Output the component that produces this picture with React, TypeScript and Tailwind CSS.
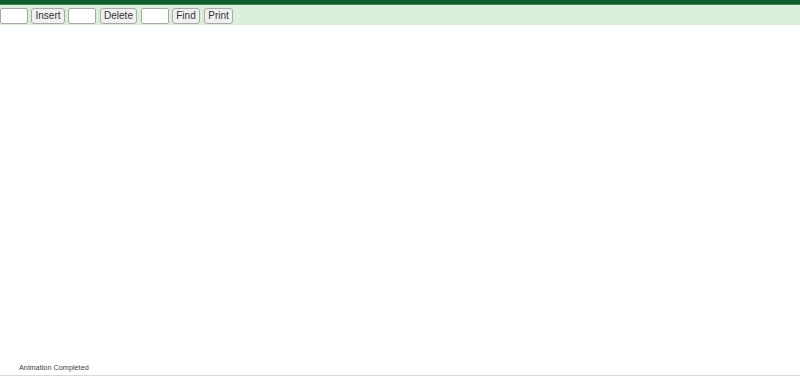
export default function App() {
  const btn =
    "h-[16px] rounded-[3px] border border-[#a9a9a9] bg-[#f0f0f0] p-0 text-center text-[10px] leading-none text-[#333]"
  const inp = "h-[16px] w-[28px] rounded-[2px] border border-[#a9a9a9] bg-white"

  return (
    <div className="flex h-[376px] w-[800px] flex-col bg-white font-['Liberation_Sans',Arial,sans-serif]">
      <div className="h-[4px] bg-[#0b5e2b]" />
      <div className="h-[1px] bg-[#3f8a4f]" />
      <div className="flex h-[20px] items-center bg-[#dcefdc] pt-[1px]">
        <input className={inp} />
        <button className={`${btn} ml-[3px] w-[34px]`}>Insert</button>
        <input className={`${inp} ml-[3px]`} />
        <button className={`${btn} ml-[4px] w-[37px]`}>Delete</button>
        <input className={`${inp} ml-[4px]`} />
        <button className={`${btn} ml-[3px] w-[28px]`}>Find</button>
        <button className={`${btn} ml-[4px] w-[29px]`}>Print</button>
      </div>
      <div className="flex-1" />
      <div className="h-[14px] pl-[19px] text-[7.3px] leading-[14px] text-[#444]">Animation Completed</div>
      <div className="h-[1px] bg-[#d8d8d8]" />
    </div>
  )
}
